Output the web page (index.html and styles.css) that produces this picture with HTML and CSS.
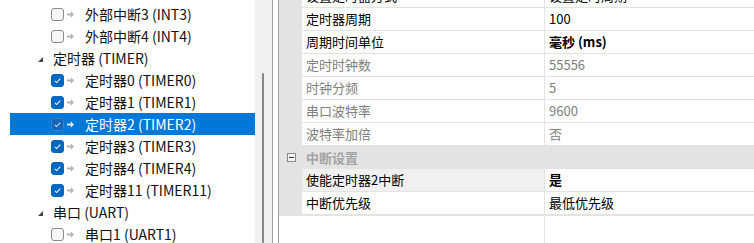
FILE: index.html
```html
<!DOCTYPE html>
<html lang="zh-CN">
<head>
<meta charset="utf-8">
<title>定时器配置</title>
<link rel="stylesheet" href="styles.css">
</head>
<body>
<div class="app">
  <div class="tree-pane">
    <ul class="tree">
      <li class="item"><span class="cb"></span><svg class="arrow" viewBox="0 0 7 7"><path d="M0 2.6h3.8V0.2L7 3.5 3.8 6.8V4.4H0z"/></svg><span class="label">外部中断3 (INT3)</span></li>
      <li class="item"><span class="cb"></span><svg class="arrow" viewBox="0 0 7 7"><path d="M0 2.6h3.8V0.2L7 3.5 3.8 6.8V4.4H0z"/></svg><span class="label">外部中断4 (INT4)</span></li>
      <li class="group"><svg class="expander" viewBox="0 0 5 5"><path d="M5 0V5H0z"/></svg><span class="label">定时器 (TIMER)</span></li>
      <li class="item"><span class="cb checked"><svg viewBox="0 0 13 13"><path d="M3.2 6.8 5.4 9 9.8 4.3"/></svg></span><svg class="arrow" viewBox="0 0 7 7"><path d="M0 2.6h3.8V0.2L7 3.5 3.8 6.8V4.4H0z"/></svg><span class="label">定时器0 (TIMER0)</span></li>
      <li class="item"><span class="cb checked"><svg viewBox="0 0 13 13"><path d="M3.2 6.8 5.4 9 9.8 4.3"/></svg></span><svg class="arrow" viewBox="0 0 7 7"><path d="M0 2.6h3.8V0.2L7 3.5 3.8 6.8V4.4H0z"/></svg><span class="label">定时器1 (TIMER1)</span></li>
      <li class="item selected"><span class="cb checked"><svg viewBox="0 0 13 13"><path d="M3.2 6.8 5.4 9 9.8 4.3"/></svg></span><svg class="arrow" viewBox="0 0 7 7"><path d="M0 2.6h3.8V0.2L7 3.5 3.8 6.8V4.4H0z"/></svg><span class="label">定时器2 (TIMER2)</span></li>
      <li class="item"><span class="cb checked"><svg viewBox="0 0 13 13"><path d="M3.2 6.8 5.4 9 9.8 4.3"/></svg></span><svg class="arrow" viewBox="0 0 7 7"><path d="M0 2.6h3.8V0.2L7 3.5 3.8 6.8V4.4H0z"/></svg><span class="label">定时器3 (TIMER3)</span></li>
      <li class="item"><span class="cb checked"><svg viewBox="0 0 13 13"><path d="M3.2 6.8 5.4 9 9.8 4.3"/></svg></span><svg class="arrow" viewBox="0 0 7 7"><path d="M0 2.6h3.8V0.2L7 3.5 3.8 6.8V4.4H0z"/></svg><span class="label">定时器4 (TIMER4)</span></li>
      <li class="item"><span class="cb checked"><svg viewBox="0 0 13 13"><path d="M3.2 6.8 5.4 9 9.8 4.3"/></svg></span><svg class="arrow" viewBox="0 0 7 7"><path d="M0 2.6h3.8V0.2L7 3.5 3.8 6.8V4.4H0z"/></svg><span class="label">定时器11 (TIMER11)</span></li>
      <li class="group"><svg class="expander" viewBox="0 0 5 5"><path d="M5 0V5H0z"/></svg><span class="label">串口 (UART)</span></li>
      <li class="item"><span class="cb"></span><svg class="arrow" viewBox="0 0 7 7"><path d="M0 2.6h3.8V0.2L7 3.5 3.8 6.8V4.4H0z"/></svg><span class="label">串口1 (UART1)</span></li>
    </ul>
    <div class="scrollbar"><div class="thumb"></div></div>
  </div>
  <div class="splitter"></div>
  <div class="prop-pane">
    <div class="props">
      <div class="row"><span class="gutter"></span><span class="name">设置定时器方式</span><span class="value">设置定时周期</span></div>
      <div class="row"><span class="gutter"></span><span class="name">定时器周期</span><span class="value">100</span></div>
      <div class="row"><span class="gutter"></span><span class="name">周期时间单位</span><span class="value bold">毫秒 (ms)</span></div>
      <div class="row disabled"><span class="gutter"></span><span class="name">定时时钟数</span><span class="value">55556</span></div>
      <div class="row disabled"><span class="gutter"></span><span class="name">时钟分频</span><span class="value">5</span></div>
      <div class="row disabled"><span class="gutter"></span><span class="name">串口波特率</span><span class="value">9600</span></div>
      <div class="row disabled"><span class="gutter"></span><span class="name">波特率加倍</span><span class="value">否</span></div>
      <div class="category"><span class="gutter"><span class="collapse"></span></span><span class="cat-label">中断设置</span></div>
      <div class="row focused"><span class="gutter"></span><span class="name">使能定时器2中断</span><span class="value bold">是</span></div>
      <div class="row"><span class="gutter"></span><span class="name">中断优先级</span><span class="value">最低优先级</span></div>
    </div>
    <div class="filler"><div class="filler-line"></div></div>
  </div>
</div>
</body>
</html>
```
FILE: styles.css
```css
* { box-sizing: border-box; }
html, body { margin: 0; padding: 0; background: #ffffff; }
body {
  width: 754px;
  height: 243px;
  overflow: hidden;
  font-family: "Noto Sans CJK SC", "Noto Sans", sans-serif;
  color: #000;
}
.app {
  display: flex;
  height: 243px;
}

/* ---------- tree ---------- */
.tree-pane {
  display: flex;
  width: 273px;
  height: 243px;
  border-right: 1px solid #a0a0a0;
  background: #fff;
}
.tree {
  list-style: none;
  margin: 0;
  padding: 3px 0 0 0;
  width: 255px;
  flex-shrink: 0;
  overflow: hidden;
}
.tree li {
  display: flex;
  align-items: center;
  height: 22px;
  margin-left: 10px;
  font-size: 14px;
  line-height: 22px;
  white-space: nowrap;
  color: #111;
}
.item { padding-left: 41px; }
.group { padding-left: 28px; }
.expander {
  flex-shrink: 0;
  width: 5px;
  height: 5px;
  fill: #444;
  margin-top: 3px;
}
.group .label { margin-left: 10px; }
.cb {
  flex-shrink: 0;
  display: flex;
  align-items: center;
  justify-content: center;
  width: 13px;
  height: 13px;
  border: 1px solid #8b8b8b;
  border-radius: 3px;
  background: #f6f6f6;
}
.cb.checked {
  border-color: #0067c0;
  background: #0067c0;
}
.cb svg {
  width: 11px;
  height: 11px;
  fill: none;
  stroke: #fff;
  stroke-width: 1.2;
}
.arrow {
  flex-shrink: 0;
  width: 7px;
  height: 7px;
  margin-left: 3px;
  fill: #b4b4b4;
}
.item .label { margin-left: 11px; }
.selected {
  background: #0078d7;
}
.tree li.selected { color: #fff; }
.selected .cb.checked {
  background: #1565b8;
  border-color: #3a80c8;
}
.selected .cb svg { stroke: #cfe2f5; }
.selected .arrow { fill: #dde9f6; }

.scrollbar {
  width: 17px;
  flex-shrink: 0;
  background: #f0f0f0;
  padding: 73px 0 0 7px;
}
.thumb {
  width: 2px;
  height: 100%;
  background: #878787;
  border-radius: 1px;
}

.splitter {
  width: 5px;
  flex-shrink: 0;
  background: #fff;
}

/* ---------- property grid ---------- */
.prop-pane {
  flex: 1;
  display: flex;
  flex-direction: column;
  border-left: 1px solid #a0a0a0;
  overflow: hidden;
}
.props {
  margin-top: -15px;
  font-size: 13px;
}
.row, .category {
  display: grid;
  grid-template-columns: 23px 242px 1fr;
  height: 23px;
}
.gutter {
  background: #e3e3e3;
}
.name, .value {
  border-bottom: 1px solid #e3e3e3;
  line-height: 22px;
  white-space: nowrap;
  overflow: hidden;
}
.name { padding-left: 4px; }
.value {
  border-left: 1px solid #e3e3e3;
  padding-left: 4px;
}
.bold { font-weight: 700; }
.disabled .name, .disabled .value { color: #808080; }
.focused .name { background: #f0f0f0; }

.category {
  background: #e3e3e3;
}
.category .gutter {
  display: flex;
  align-items: center;
  padding-left: 8px;
}
.collapse {
  position: relative;
  width: 9px;
  height: 9px;
  border: 1px solid #8a8a8a;
  background: #f4f4f4;
}
.collapse::after {
  content: "";
  position: absolute;
  left: 1px;
  top: 3px;
  width: 5px;
  height: 1px;
  background: #333;
}
.cat-label {
  grid-column: 2 / 4;
  padding-left: 4px;
  line-height: 23px;
  font-weight: 700;
  color: #a3a3a3;
}
.filler {
  flex: 1;
  background: #fff;
  border-top: 1px solid #e3e3e3;
}
.filler-line {
  margin-left: 265px;
  height: 100%;
  border-left: 1px solid #e3e3e3;
}
```
